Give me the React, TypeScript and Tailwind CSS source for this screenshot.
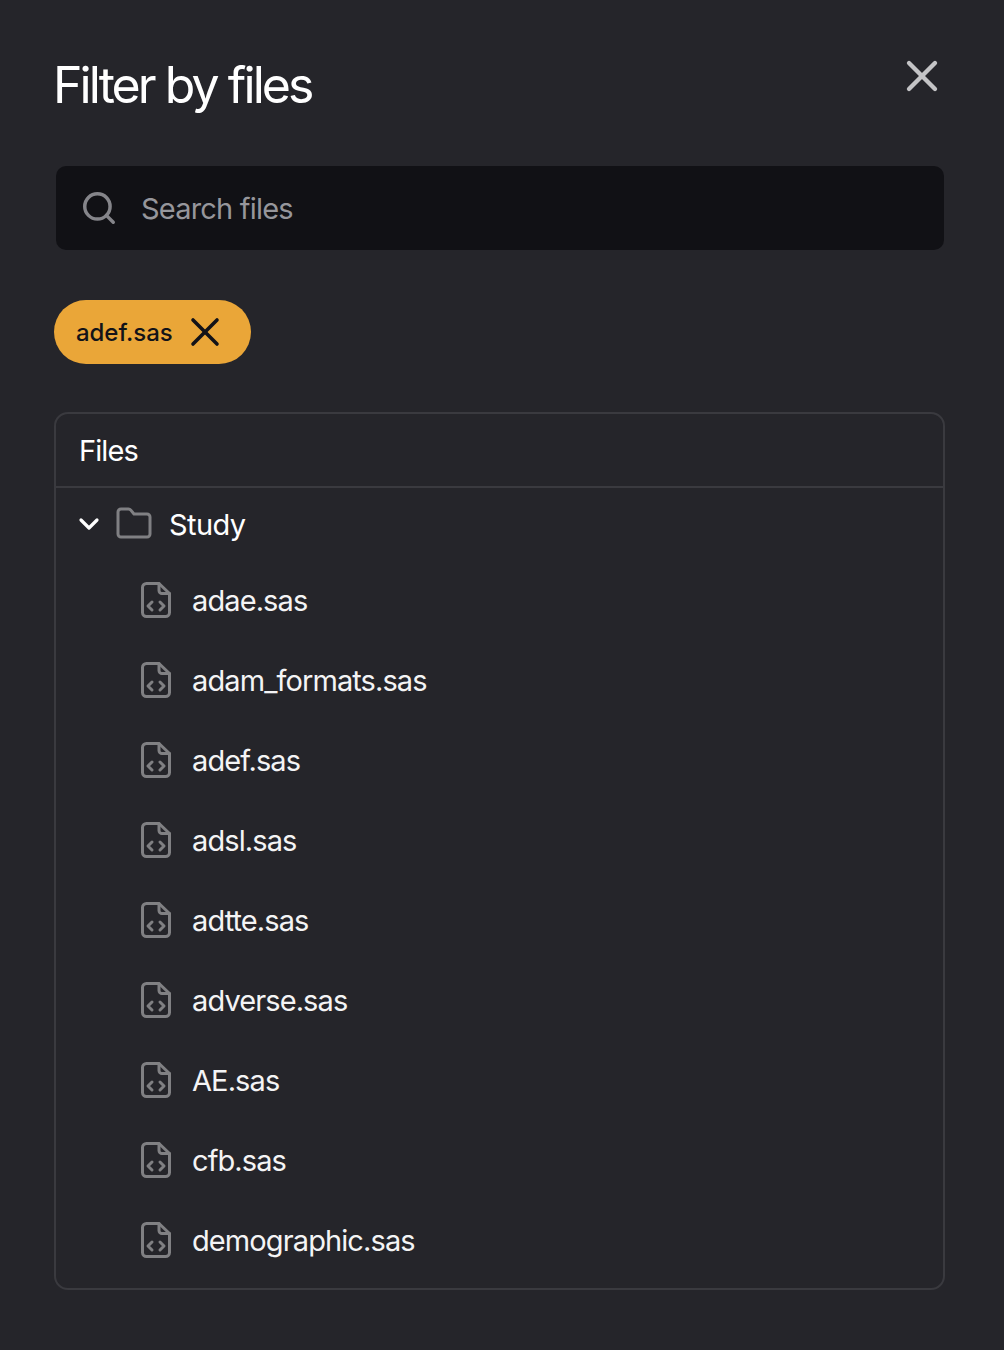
import { ChevronDown, Search, X } from 'lucide-react'

const files = [
  'adae.sas',
  'adam_formats.sas',
  'adef.sas',
  'adsl.sas',
  'adtte.sas',
  'adverse.sas',
  'AE.sas',
  'cfb.sas',
  'demographic.sas',
]

function FileCodeIcon() {
  return (
    <svg width="32" height="38" viewBox="0 0 32 38" fill="none" stroke="#808083" strokeWidth="3" strokeLinecap="round" strokeLinejoin="round" className="shrink-0">
      <path d="M19 1.500H6.500a4 4 0 0 0-4 4v25a4 4 0 0 0 4 4h19a4 4 0 0 0 4-4V11.500L19 1.500Z" />
      <path d="M19 1.500v7a3 3 0 0 0 3 3h7.500" />
      <path d="M12 20l-4 4 4 4" />
      <path d="M20 20l4 4-4 4" />
    </svg>
  )
}

function FolderIcon() {
  return (
    <svg width="36" height="32" viewBox="0 0 36 32" fill="none" stroke="#808083" strokeWidth="3" strokeLinejoin="round" className="shrink-0">
      <path d="M2 5a3 3 0 0 1 3-3h7.500a3 3 0 0 1 2.300 1.100L18 7h13a3 3 0 0 1 3 3v17a3 3 0 0 1-3 3H5a3 3 0 0 1-3-3V5Z" />
    </svg>
  )
}

export default function App() {
  return (
    <div className="h-[1350px] bg-[#25252a] pr-[59px] pl-[55px] font-['Inter',sans-serif] text-white">
      <div className="flex items-start justify-between pt-[54px]">
        <h1 className="-ml-[2px] text-[50px] leading-[62px] font-normal tracking-[-2.93px]">Filter by files</h1>
        <X className="-mt-[4px] -mr-[3px] text-[#c4c4c6]" size={52} strokeWidth={2} />
      </div>

      <div className="mt-[50px] mr-px ml-px flex h-[84px] items-center rounded-[10px] bg-[#111115] pl-[24px]">
        <Search className="text-[#85858a]" size={38} strokeWidth={2.2} />
        <span className="mt-[2px] ml-[23px] text-[29px] tracking-[-0.8px] text-[#96969b]">Search files</span>
      </div>

      <div className="mt-[50px] -ml-px flex h-[64px] w-[197px] items-center rounded-full bg-[#eaa638] pl-[22px] text-[#131318]">
        <span className="mt-[2px] text-[24px] font-medium tracking-[-0.05px]">adef.sas</span>
        <X className="ml-[8px]" size={48} strokeWidth={1.8} />
      </div>

      <div className="mt-[48px] -ml-px h-[878px] rounded-[14px] border-2 border-[#3a3a3f]">
        <div className="flex h-[74px] items-center border-b-2 border-[#3a3a3f] pt-[2px] pl-[23px] text-[29px] tracking-[-0.9px]">Files</div>
        <div className="flex h-[73px] items-center pl-[17px]">
          <ChevronDown className="-mt-[2px]" size={32} strokeWidth={2.4} />
          <span className="-mt-[4px] ml-[11px]"><FolderIcon /></span>
          <span className="ml-[17px] text-[29px] tracking-[-0.6px]">Study</span>
        </div>
        <ul>
          {files.map((name) => (
            <li key={name} className="flex h-[80px] items-center pl-[84px]">
              <FileCodeIcon />
              <span className="ml-[20px] text-[29px] tracking-[-0.9px] text-[#f4f4f5]">{name}</span>
            </li>
          ))}
        </ul>
      </div>
    </div>
  )
}
